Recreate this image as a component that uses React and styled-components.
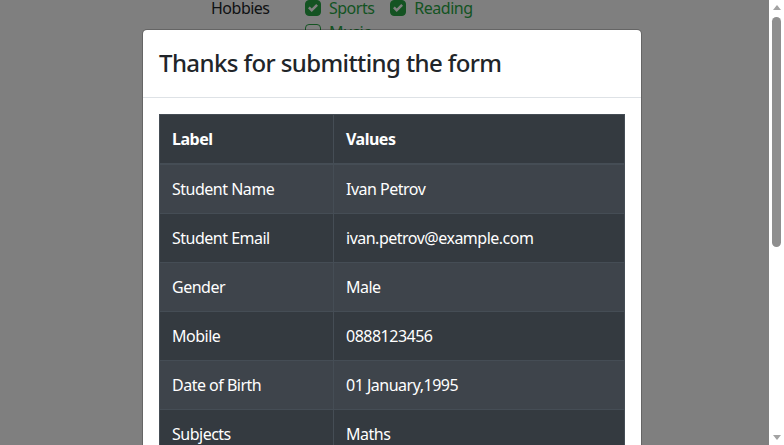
import React from 'react';
import styled, { createGlobalStyle } from 'styled-components';

const GlobalStyle = createGlobalStyle`
    html, body {
        margin: 0;
        padding: 0;
        height: 100%;
        overflow: hidden;
    }
    body {
        font-family: 'Noto Sans', 'Open Sans', sans-serif;
        font-size: 16px;
        line-height: 1.5;
        letter-spacing: -0.5px;
        color: #212529;
        background: #fff;
    }
`

const Page = styled.div`
    display: flex;
    width: 784px;
    height: 445px;
`

const Viewport = styled.div`
    position: relative;
    flex: 1;
    overflow: hidden;
    background: #fff;
`

const FormRow = styled.div`
    display: flex;
    margin-top: -4px;
    padding-left: 211px;
`

const FieldLabel = styled.div`
    width: 94px;
`

const CheckGroup = styled.div`
    display: flex;
    flex-wrap: wrap;
    width: 200px;
`

const CheckItem = styled.div`
    display: flex;
    align-items: center;
    gap: 8px;
    margin-right: 16px;
    color: #28a745;
`

const Box = styled.span`
    width: 16px;
    height: 16px;
    box-sizing: border-box;
    border-radius: 4px;
    border: 1px solid #28a745;
    background: ${p => (p.checked ? '#28a745' : '#fff')};
    display: flex;
    align-items: center;
    justify-content: center;
`

const Backdrop = styled.div`
    position: absolute;
    inset: 0;
    right: -15px;
    background: rgba(0, 0, 0, 0.5);
    display: flex;
    justify-content: center;
    align-items: flex-start;
    padding-top: 29px;
`

const Modal = styled.div`
    width: 498px;
    background: #fff;
    border: 1px solid rgba(0, 0, 0, 0.2);
    border-radius: 5px;
    background-clip: padding-box;
`

const ModalHeader = styled.div`
    padding: 15px 16px 16px;
    border-bottom: 1px solid #dee2e6;
`

const Title = styled.h4`
    margin: 0;
    font-size: 24px;
    font-weight: 500;
    line-height: 36px;
    letter-spacing: -0.6px;
    color: #212529;
`

const ModalBody = styled.div`
    padding: 16px;
`

const Table = styled.table`
    width: 100%;
    border-collapse: collapse;
    background: #343a40;
    color: #fff;
    border: 1px solid #454d55;
`

const HeadCell = styled.th`
    text-align: left;
    font-weight: 700;
    padding: 12px;
    border: 1px solid #454d55;
    border-bottom-width: 2px;
    width: ${p => p.w || 'auto'};
`

const Row = styled.tr`
    background: ${p => (p.striped ? '#3e444b' : 'transparent')};
`

const Cell = styled.td`
    padding: 12px;
    border: 1px solid #454d55;
`

const Scrollbar = styled.div`
    width: 15px;
    background: #fff;
    display: flex;
    flex-direction: column;
    align-items: center;
    padding-top: 5px;
    padding-bottom: 5px;
    box-sizing: border-box;
`

const Arrow = styled.span`
    width: 0;
    height: 0;
    border-left: 4px solid transparent;
    border-right: 4px solid transparent;
    ${p => (p.down ? 'border-top: 5px solid #a3a3a3;' : 'border-bottom: 5px solid #a3a3a3;')}
`

const Thumb = styled.div`
    width: 9px;
    height: 230px;
    margin-top: 7px;
    border-radius: 5px;
    background: #8f8f8f;
`

const Spacer = styled.div`
    flex: 1;
`

const Check = () => (
    <svg width="10" height="10" viewBox="0 0 8 8">
        <path d="M6.564.75l-3.59 3.612-1.538-1.55L0 4.26 2.974 7.25 8 2.193z" fill="#fff" />
    </svg>
)

const rows = [
    ['Student Name', 'Ivan Petrov'],
    ['Student Email', 'ivan.petrov@example.com'],
    ['Gender', 'Male'],
    ['Mobile', '0888123456'],
    ['Date of Birth', '01 January,1995'],
    ['Subjects', 'Maths'],
    ['Hobbies', 'Sports, Reading'],
]

export default function App() {
    return (
        <Page>
            <GlobalStyle />
            <Viewport>
                <FormRow>
                    <FieldLabel>Hobbies</FieldLabel>
                    <CheckGroup>
                        <CheckItem><Box checked><Check /></Box>Sports</CheckItem>
                        <CheckItem><Box checked><Check /></Box>Reading</CheckItem>
                        <CheckItem><Box />Music</CheckItem>
                    </CheckGroup>
                </FormRow>
                <Backdrop>
                    <Modal>
                        <ModalHeader>
                            <Title>Thanks for submitting the form</Title>
                        </ModalHeader>
                        <ModalBody>
                            <Table>
                                <thead>
                                    <tr>
                                        <HeadCell w="149px">Label</HeadCell>
                                        <HeadCell>Values</HeadCell>
                                    </tr>
                                </thead>
                                <tbody>
                                    {rows.map((r, i) => (
                                        <Row key={r[0]} striped={i % 2 === 0}>
                                            <Cell>{r[0]}</Cell>
                                            <Cell>{r[1]}</Cell>
                                        </Row>
                                    ))}
                                </tbody>
                            </Table>
                        </ModalBody>
                    </Modal>
                </Backdrop>
            </Viewport>
            <Scrollbar>
                <Arrow />
                <Thumb />
                <Spacer />
                <Arrow down />
            </Scrollbar>
        </Page>
    );
}
